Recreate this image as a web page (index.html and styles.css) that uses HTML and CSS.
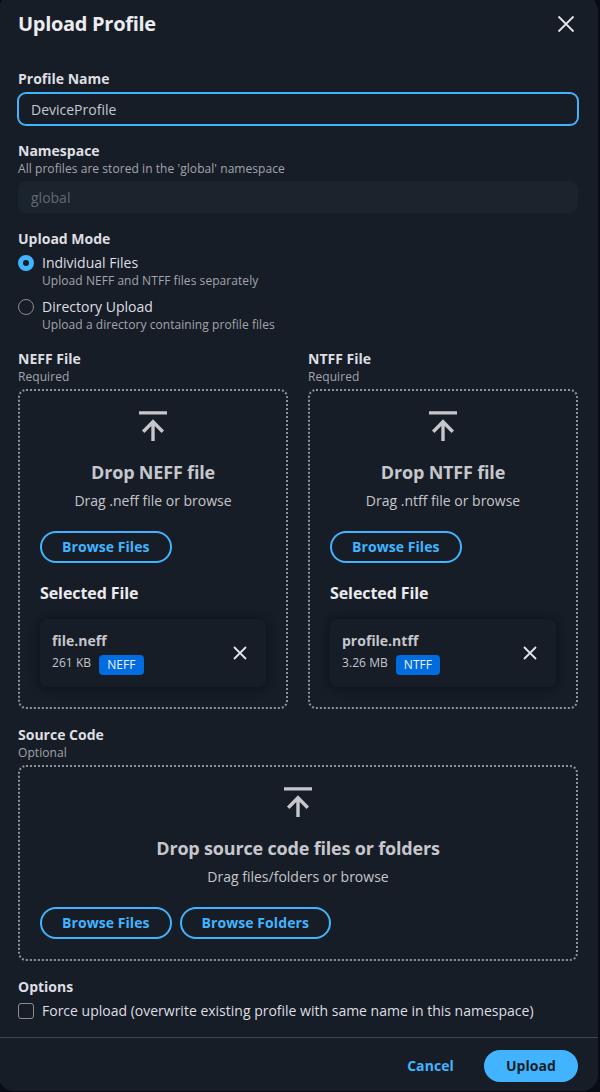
FILE: index.html
```html
<!DOCTYPE html>
<html lang="en">
<head>
  <meta charset="UTF-8">
  <meta name="viewport" content="width=device-width, initial-scale=1.0">
  <title>Upload Profile</title>
  <link rel="stylesheet" href="styles.css">
</head>
<body>
  <div class="modal">
    <div class="modal-header">
      <h2>Upload Profile</h2>
      <button class="icon-btn" aria-label="Close">
        <svg class="close-lg" viewBox="0 0 18 18"><path d="M1.5 1.5l15 15M16.5 1.5l-15 15"/></svg>
      </button>
    </div>

    <div class="modal-body">
      <div class="field">
        <label class="label" for="name">Profile Name</label>
        <input class="input focused" id="name" type="text" value="DeviceProfile">
      </div>

      <div class="field">
        <label class="label" for="namespace">Namespace</label>
        <div class="desc">All profiles are stored in the 'global' namespace</div>
        <input class="input" id="namespace" type="text" value="global" disabled>
      </div>

      <div class="field">
        <div class="label">Upload Mode</div>
        <div class="choices">
          <div class="choice">
            <span class="radio checked"></span>
            <div>
              <div class="choice-label">Individual Files</div>
              <div class="desc">Upload NEFF and NTFF files separately</div>
            </div>
          </div>
          <div class="choice">
            <span class="radio"></span>
            <div>
              <div class="choice-label">Directory Upload</div>
              <div class="desc">Upload a directory containing profile files</div>
            </div>
          </div>
        </div>
      </div>

      <div class="columns">
        <div class="field">
          <div class="label">NEFF File</div>
          <div class="desc">Required</div>
          <div class="dropzone">
            <svg class="upload-icon" viewBox="0 0 32 32"><path d="M2 3.9h28M16 32V12.5M6.2 22.8L16 12.7l9.8 10.1"/></svg>
            <h3>Drop NEFF file</h3>
            <p class="hint">Drag .neff file or browse</p>
            <div class="buttons"><button class="btn">Browse Files</button></div>
            <h4>Selected File</h4>
            <div class="file">
              <div>
                <div class="file-name">file.neff</div>
                <div class="file-meta"><span>261 KB</span><span class="badge">NEFF</span></div>
              </div>
              <button class="icon-btn" aria-label="Remove">
                <svg class="close-sm" viewBox="0 0 14 14"><path d="M1 1l12 12M13 1L1 13"/></svg>
              </button>
            </div>
          </div>
        </div>

        <div class="field">
          <div class="label">NTFF File</div>
          <div class="desc">Required</div>
          <div class="dropzone">
            <svg class="upload-icon" viewBox="0 0 32 32"><path d="M2 3.9h28M16 32V12.5M6.2 22.8L16 12.7l9.8 10.1"/></svg>
            <h3>Drop NTFF file</h3>
            <p class="hint">Drag .ntff file or browse</p>
            <div class="buttons"><button class="btn">Browse Files</button></div>
            <h4>Selected File</h4>
            <div class="file">
              <div>
                <div class="file-name">profile.ntff</div>
                <div class="file-meta"><span>3.26 MB</span><span class="badge">NTFF</span></div>
              </div>
              <button class="icon-btn" aria-label="Remove">
                <svg class="close-sm" viewBox="0 0 14 14"><path d="M1 1l12 12M13 1L1 13"/></svg>
              </button>
            </div>
          </div>
        </div>
      </div>

      <div class="field">
        <div class="label">Source Code</div>
        <div class="desc">Optional</div>
        <div class="dropzone">
          <svg class="upload-icon" viewBox="0 0 32 32"><path d="M2 3.9h28M16 32V12.5M6.2 22.8L16 12.7l9.8 10.1"/></svg>
          <h3>Drop source code files or folders</h3>
          <p class="hint">Drag files/folders or browse</p>
          <div class="buttons">
            <button class="btn">Browse Files</button>
            <button class="btn">Browse Folders</button>
          </div>
        </div>
      </div>

      <div class="field">
        <div class="label">Options</div>
        <div class="choice option">
          <span class="checkbox"></span>
          <div class="choice-label">Force upload (overwrite existing profile with same name in this namespace)</div>
        </div>
      </div>
    </div>

    <div class="modal-footer">
      <button class="btn link">Cancel</button>
      <button class="btn primary">Upload</button>
    </div>
  </div>
</body>
</html>
```

FILE: styles.css
```css
* {
  box-sizing: border-box;
}
body {
  margin: 0;
  height: 1092px;
  overflow: hidden;
  background: #080d15;
  font-family: "Open Sans", sans-serif;
  font-size: 14px;
  line-height: 20px;
  color: #dedee3;
}
h2, h3, h4, p {
  margin: 0;
}
.modal {
  width: 600px;
  height: 1096px;
  margin: -5px 0 0 -2px;
  background: #161d26;
  border-radius: 16px;
}
.modal-header {
  display: flex;
  justify-content: space-between;
  align-items: center;
  height: 58px;
  padding: 0 23px 0 20px;
}
h2 {
  font-size: 20px;
  line-height: 24px;
  letter-spacing: -0.3px;
  color: #ebebf0;
}
.icon-btn {
  display: flex;
  padding: 0;
  border: 0;
  background: none;
  cursor: pointer;
}
.icon-btn svg {
  fill: none;
  stroke: #e4e4e8;
  stroke-width: 1.8;
}
.close-lg {
  width: 18px;
  height: 18px;
}
.close-sm {
  width: 14px;
  height: 14px;
}
.modal-body {
  display: flex;
  flex-direction: column;
  gap: 16px;
  padding: 16px 20px;
}
.label {
  display: block;
  font-weight: 700;
}
.desc {
  font-size: 12px;
  line-height: 16px;
  letter-spacing: 0.06px;
  color: #a4a4ad;
}
.input {
  display: block;
  width: 100%;
  height: 32px;
  margin-top: 4px;
  padding: 0 12px;
  border: 1px solid #1b232d;
  border-radius: 8px;
  background: #1b232d;
  font: inherit;
  color: #656871;
}
.input.focused {
  border-color: #42b4ff;
  box-shadow: 0 0 0 1px #42b4ff;
  background: #161d26;
  color: #c6c6cd;
}
.choices {
  display: flex;
  flex-direction: column;
  gap: 8px;
  margin-top: 4px;
}
.choice {
  display: flex;
  gap: 8px;
}
.option {
  margin-top: 4px;
}
.radio, .checkbox {
  flex: none;
  width: 16px;
  height: 16px;
  margin-top: 2px;
  border: 1px solid #8c8c94;
  border-radius: 50%;
}
.radio.checked {
  border: 5px solid #42b4ff;
}
.checkbox {
  border-radius: 3px;
}
.columns {
  display: grid;
  grid-template-columns: 1fr 1fr;
  gap: 20px;
}
.dropzone {
  margin-top: 4px;
  padding: 20px;
  border: 2px dotted #8c959a;
  border-radius: 8px;
  text-align: center;
}
.upload-icon {
  display: block;
  width: 32px;
  height: 32px;
  margin: -2px auto 20px;
  fill: none;
  stroke: #c6c6cd;
  stroke-width: 3.4;
}
h3 {
  font-size: 18px;
  line-height: 22px;
  letter-spacing: -0.18px;
  color: #c6c6cd;
}
.hint {
  margin-top: 8px;
  color: #c6c6cd;
}
.buttons {
  display: flex;
  gap: 8px;
  margin-top: 20px;
}
.btn {
  height: 32px;
  padding: 0 20px;
  border: 2px solid #42b4ff;
  border-radius: 20px;
  background: none;
  font: 700 14px/20px "Open Sans", sans-serif;
  letter-spacing: 0.07px;
  color: #42b4ff;
  cursor: pointer;
}
.btn.link {
  border-color: transparent;
}
.btn.primary {
  background: #42b4ff;
  color: #161d26;
}
h4 {
  margin-top: 20px;
  font-size: 16px;
  line-height: 20px;
  letter-spacing: -0.08px;
  color: #ebebf0;
  text-align: left;
}
.file {
  display: flex;
  justify-content: space-between;
  align-items: center;
  height: 68px;
  margin-top: 16px;
  padding: 0 19px 0 12px;
  border-radius: 8px;
  box-shadow: 0 1px 8px 2px rgba(0, 7, 22, 0.35);
  text-align: left;
}
.file-name {
  font-weight: 700;
  color: #c6c6cd;
}
.file-meta {
  display: flex;
  gap: 8px;
  margin-top: 4px;
  font-size: 12px;
  line-height: 16px;
  letter-spacing: 0.06px;
  color: #c6c6cd;
}
.badge {
  height: 20px;
  padding: 0 8px;
  border-radius: 4px;
  background: #006ce0;
  line-height: 20px;
  color: #f0f4f8;
}
.modal-footer {
  display: flex;
  justify-content: flex-end;
  align-items: center;
  gap: 8px;
  height: 57px;
  padding: 0 20px;
  border-top: 1px solid #424650;
}
```
